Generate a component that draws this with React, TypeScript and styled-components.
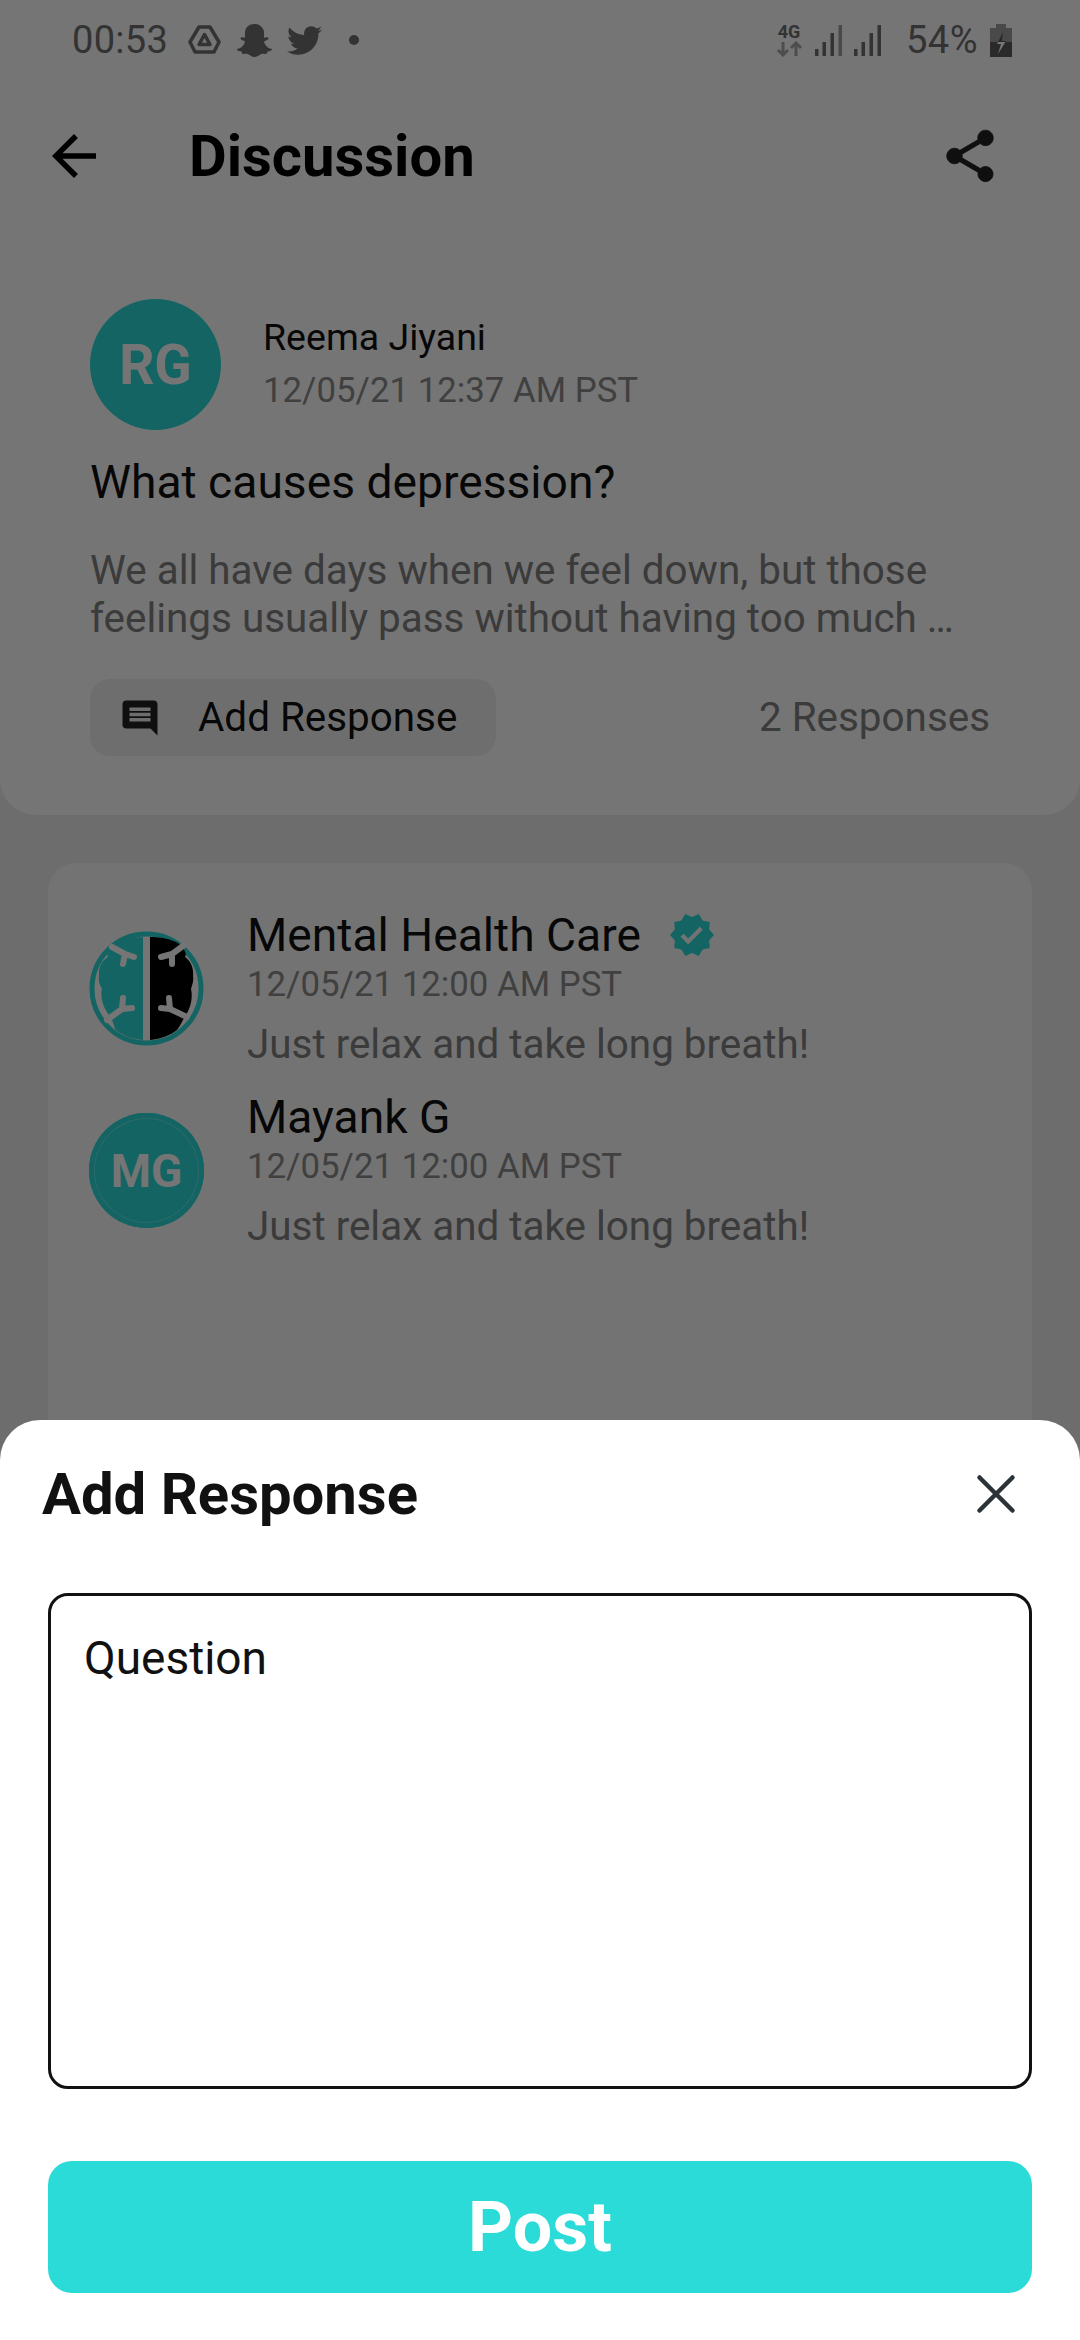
import React from "react";
import styled, { createGlobalStyle } from "styled-components";
import { FaSnapchatGhost, FaTwitter } from "react-icons/fa";
import { MdVerified } from "react-icons/md";

const Global = createGlobalStyle`
  html, body { margin: 0; padding: 0; background: #fff; }
  * { box-sizing: border-box; }
  body { font-family: Roboto, "Liberation Sans", sans-serif; }
`;

const Screen = styled.div`
  position: relative;
  width: 1080px;
  height: 2340px;
  overflow: hidden;
  background: #eeeeee;
  display: flex;
  flex-direction: column;
`;

const TopPanel = styled.div`
  background: #ffffff;
  border-radius: 0 0 36px 36px;
  height: 815px;
  flex: none;
  display: flex;
  flex-direction: column;
`;

const StatusBar = styled.div`
  height: 80px;
  padding: 0 68px 0 72px;
  display: flex;
  align-items: center;
  justify-content: space-between;
  color: #6f6f6f;
`;

const StatusGroup = styled.div`
  display: flex;
  align-items: center;
`;

const Clock = styled.span`
  font-size: 38px;
  width: 116px;
  letter-spacing: 0.3px;
`;

const StatusIconSlot = styled.span<{ $w: number }>`
  width: ${(p) => p.$w}px;
  display: flex;
  align-items: center;
  color: #6f6f6f;
`;

const Dot = styled.span`
  width: 10px;
  height: 10px;
  border-radius: 50%;
  background: #6f6f6f;
`;

const MobileBlock = styled.span`
  width: 39px;
  display: flex;
  flex-direction: column;
  align-items: flex-start;
`;

const MobileLabel = styled.span`
  width: 26px;
  text-align: center;
  font-size: 18px;
  line-height: 18px;
  font-weight: 700;
  color: #6f6f6f;
`;

const Percent = styled.span`
  font-size: 38px;
  margin: 0 12px 0 24px;
  letter-spacing: 0.5px;
`;

const Header = styled.div`
  height: 152px;
  padding: 0 0 0 41px;
  display: flex;
  align-items: center;
`;

const Title = styled.h1`
  margin: 0 0 0 82px;
  font-size: 58px;
  font-weight: 700;
  color: #000;
  flex: 1;
`;

const IconSlot = styled.span`
  display: flex;
  width: 62px;
  height: 62px;
  margin-right: 79px;
`;

const Post = styled.div`
  padding: 67px 90px 0;
  display: flex;
  flex-direction: column;
`;

const AuthorRow = styled.div`
  display: flex;
  align-items: center;
  gap: 42px;
`;

const Avatar = styled.div<{ $size: number; $font: number; $ring?: boolean }>`
  width: ${(p) => p.$size}px;
  height: ${(p) => p.$size}px;
  flex: none;
  border-radius: 50%;
  background: #2bdbd8;
  color: #fff;
  display: flex;
  align-items: center;
  justify-content: center;
  font-size: ${(p) => p.$font}px;
  font-weight: 700;
  box-shadow: ${(p) => (p.$ring ? "inset 0 0 0 5px #2bdbd8, inset 0 0 0 6px #5fe6e3" : "none")};
`;

const ListAvatarSlot = styled.div`
  margin-top: 22px;
  flex: none;
  display: flex;
`;

const AuthorMeta = styled.div`
  margin-top: -2px;
  display: flex;
  flex-direction: column;
`;

const AuthorName = styled.div`
  font-size: 37.500px;
  line-height: 52px;
  color: #111;
`;

const AuthorDate = styled.div`
  font-size: 34.800px;
  line-height: 54px;
  color: #8c8c8c;
`;

const Question = styled.div`
  font-size: 46.200px;
  line-height: 60px;
  color: #111;
  margin-top: 22px;
`;

const Body = styled.div`
  font-size: 40.400px;
  line-height: 48px;
  color: #808080;
  margin-top: 35px;
  white-space: pre-line;
`;

const ActionRow = styled.div`
  margin-top: 36px;
  display: flex;
  align-items: center;
  justify-content: space-between;
`;

const ActionButton = styled.div`
  width: 406px;
  height: 77px;
  border-radius: 20px;
  background: #f0f0f0;
  display: flex;
  align-items: center;
  padding-left: 29px;
  gap: 37px;
  font-size: 40.400px;
  color: #111;
`;

const ResponseCount = styled.div`
  font-size: 40.400px;
  color: #808080;
`;

const ResponsesCard = styled.div`
  margin: 48px 48px 0;
  flex: 1;
  background: #fbfbfb;
  border-radius: 28px 28px 0 0;
  padding: 46px 40px 0 41px;
  display: flex;
  flex-direction: column;
  gap: 8px;
`;

const ResponseRow = styled.div`
  display: flex;
  align-items: flex-start;
  gap: 43px;
`;

const ResponseMeta = styled.div`
  display: flex;
  flex-direction: column;
`;

const NameRow = styled.div`
  display: flex;
  align-items: center;
  gap: 27px;
  font-size: 46.200px;
  line-height: 52px;
  color: #111;
`;

const ResponseDate = styled.div`
  font-size: 34.800px;
  line-height: 46px;
  color: #8c8c8c;
`;

const ResponseText = styled.div`
  font-size: 40.400px;
  line-height: 76px;
  color: #808080;
`;

const Scrim = styled.div`
  position: absolute;
  inset: 0;
  background: rgba(0, 0, 0, 0.54);
`;

const Sheet = styled.div`
  position: absolute;
  left: 0;
  right: 0;
  bottom: 0;
  height: 920px;
  background: #fff;
  border-radius: 40px 40px 0 0;
  display: flex;
  flex-direction: column;
  padding: 0 48px;
`;

const SheetHeader = styled.div`
  height: 173px;
  margin: 0 0 0 -6px;
  padding-bottom: 25px;
  display: flex;
  align-items: center;
  justify-content: space-between;
`;

const SheetTitle = styled.div`
  font-size: 58px;
  font-weight: 700;
  color: #111;
`;

const CloseSlot = styled.span`
  display: flex;
  width: 60px;
  height: 60px;
  margin-right: 6px;
`;

const Field = styled.div`
  height: 496px;
  border: 3px solid #111;
  border-radius: 20px;
  padding: 35px 33px;
  font-size: 46px;
  line-height: 54px;
  color: #111;
`;

const PostButton = styled.div`
  margin-top: 72px;
  height: 132px;
  border-radius: 24px;
  background: #2bdbd8;
  color: #fff;
  font-size: 70px;
  font-weight: 700;
  display: flex;
  align-items: center;
  justify-content: center;
`;

const Signal = ({ full }: { full: boolean }) => (
  <svg width="28" height="31" viewBox="0 0 28 31">
    <rect x="0" y="24" width="3.500" height="7" fill="#6f6f6f" />
    <rect x="7.500" y="17" width="3.500" height="14" fill="#6f6f6f" />
    <rect x="15.500" y="8" width="3.500" height="23" fill="#6f6f6f" />
    <rect x="23.500" y="0" width="3.500" height="31" fill={full ? "#6f6f6f" : "#a0a0a0"} />
  </svg>
);

const Arrows = () => (
  <svg width="28" height="16" viewBox="0 0 28 16" fill="none" stroke="#a8a8a8" strokeWidth="3">
    <path d="M7 1v13M2 9l5 5 5-5" />
    <path d="M20 15V2M15 7l5-5 5 5" />
  </svg>
);

const Battery = () => (
  <svg width="22" height="33" viewBox="0 0 22 33">
    <rect x="6" y="0" width="10" height="4" fill="#a0a0a0" />
    <rect x="0" y="4" width="22" height="14" fill="#a0a0a0" />
    <rect x="0" y="18" width="22" height="15" fill="#5c5c5c" />
    <path d="M13 8 8 18H15.400L16 17H12z" fill="#5c5c5c" />
    <path d="M8 18 7 20H11L8 30 15.400 18z" fill="#fff" />
  </svg>
);

const DriveMark = () => (
  <svg width="33" height="30" viewBox="0 0 33 30" fill="none" stroke="#6f6f6f">
    <path d="M11 2h11l9 15-5 10H7L2 17z" strokeWidth="3.500" strokeLinejoin="round" />
    <path d="M16.500 9.500 22 19.500H11z" strokeWidth="3.500" strokeLinejoin="round" />
  </svg>
);

const BackArrow = () => (
  <svg width="66" height="66" viewBox="0 0 24 24" fill="#000">
    <path d="M20 11H7.830l5.590-5.590L12 4l-8 8 8 8 1.410-1.410L7.830 13H20v-2z" />
  </svg>
);

const Share = () => (
  <svg width="62" height="62" viewBox="0 0 24 24" fill="#222" stroke="#222" strokeWidth="0.3">
    <path d="M18 16.080c-.76 0-1.440.3-1.960.77L8.910 12.700c.05-.23.09-.46.09-.7s-.04-.47-.09-.7l7.050-4.110c.54.5 1.250.81 2.040.81 1.660 0 3-1.340 3-3s-1.340-3-3-3-3 1.340-3 3c0 .24.04.47.09.7L8.040 9.810C7.500 9.310 6.790 9 6 9c-1.660 0-3 1.340-3 3s1.340 3 3 3c.79 0 1.500-.31 2.040-.81l7.120 4.160c-.05.21-.08.43-.08.65 0 1.610 1.310 2.920 2.920 2.920 1.610 0 2.920-1.310 2.920-2.920s-1.310-2.920-2.920-2.920z" />
  </svg>
);

const Comment = () => (
  <svg width="42" height="42" viewBox="0 0 24 24" fill="#222">
    <path d="M21.990 4c0-1.100-.89-2-1.990-2H4c-1.100 0-2 .9-2 2v12c0 1.100.9 2 2 2h14l4 4-.01-18zM18 14H6v-2h12v2zm0-3H6V9h12v2zm0-3H6V6h12v2z" />
  </svg>
);

const Close = () => (
  <svg width="60" height="60" viewBox="0 0 60 60" stroke="#2b3238" strokeWidth="4.500" strokeLinecap="round">
    <path d="M13.500 13.500 46.500 46.500M46.500 13.500 13.500 46.500" />
  </svg>
);

const Brain = () => (
  <svg width="115" height="115" viewBox="0 0 115 115">
    <circle cx="57.500" cy="57.500" r="54.500" fill="#fff" stroke="#2bdbd8" strokeWidth="5" />
    <path d="M54 6C44 6 35 8 27 12 20 18 17 23 19 26 12 30 9 38 10 45 9 50 11 54 13 58 11 66 14 76 20 84 24 90 25 94 26 98 32 104 42 108 54 109z" fill="#2bdbd8" />
    <path d="M61 6C72 6 81 8 89 12 96 18 98 23 96 26 102 30 105 38 104 45 105 50 103 54 102 58 104 66 102 76 97 84 93 90 92 94 88 99 82 104 72 108 61 109z" fill="#000" />
    <g stroke="#fff" strokeWidth="6" strokeLinecap="round" strokeLinejoin="round" fill="none">
      <path d="M23 16 36 23M36 23 34 33M36 23 45 26" />
      <path d="M94 15 83 23M83 23 72 26M83 23 83 33" />
      <path d="M18 89 33 78M33 78 34 67M33 78 43 77" />
      <path d="M98 86 81 78M81 78 80 67M81 78 72 77" />
    </g>
  </svg>
);

export default function App() {
  return (
    <Screen>
      <Global />
      <TopPanel>
        <StatusBar>
          <StatusGroup>
            <Clock>00:53</Clock>
            <StatusIconSlot $w={49}><DriveMark /></StatusIconSlot>
            <StatusIconSlot $w={50}><FaSnapchatGhost size={35} /></StatusIconSlot>
            <StatusIconSlot $w={62}><FaTwitter size={35} /></StatusIconSlot>
            <Dot />
          </StatusGroup>
          <StatusGroup>
            <MobileBlock>
              <MobileLabel>4G</MobileLabel>
              <Arrows />
            </MobileBlock>
            <StatusIconSlot $w={39}><Signal full={false} /></StatusIconSlot>
            <StatusIconSlot $w={28}><Signal full /></StatusIconSlot>
            <Percent>54%</Percent>
            <Battery />
          </StatusGroup>
        </StatusBar>
        <Header>
          <BackArrow />
          <Title>Discussion</Title>
          <IconSlot><Share /></IconSlot>
        </Header>
        <Post>
          <AuthorRow>
            <Avatar $size={131} $font={55}>RG</Avatar>
            <AuthorMeta>
              <AuthorName>Reema Jiyani</AuthorName>
              <AuthorDate>12/05/21 12:37 AM PST</AuthorDate>
            </AuthorMeta>
          </AuthorRow>
          <Question>What causes depression?</Question>
          <Body>{"We all have days when we feel down, but those\nfeelings usually pass without having too much …"}</Body>
          <ActionRow>
            <ActionButton><Comment />Add Response</ActionButton>
            <ResponseCount>2 Responses</ResponseCount>
          </ActionRow>
        </Post>
      </TopPanel>
      <ResponsesCard>
        <ResponseRow>
          <ListAvatarSlot><Brain /></ListAvatarSlot>
          <ResponseMeta>
            <NameRow>Mental Health Care <MdVerified size={48} color="#2bdbd8" /></NameRow>
            <ResponseDate>12/05/21 12:00 AM PST</ResponseDate>
            <ResponseText>Just relax and take long breath!</ResponseText>
          </ResponseMeta>
        </ResponseRow>
        <ResponseRow>
          <ListAvatarSlot><Avatar $size={115} $font={46} $ring>MG</Avatar></ListAvatarSlot>
          <ResponseMeta>
            <NameRow>Mayank G</NameRow>
            <ResponseDate>12/05/21 12:00 AM PST</ResponseDate>
            <ResponseText>Just relax and take long breath!</ResponseText>
          </ResponseMeta>
        </ResponseRow>
      </ResponsesCard>
      <Scrim />
      <Sheet>
        <SheetHeader>
          <SheetTitle>Add Response</SheetTitle>
          <CloseSlot><Close /></CloseSlot>
        </SheetHeader>
        <Field>Question</Field>
        <PostButton>Post</PostButton>
      </Sheet>
    </Screen>
  );
}
